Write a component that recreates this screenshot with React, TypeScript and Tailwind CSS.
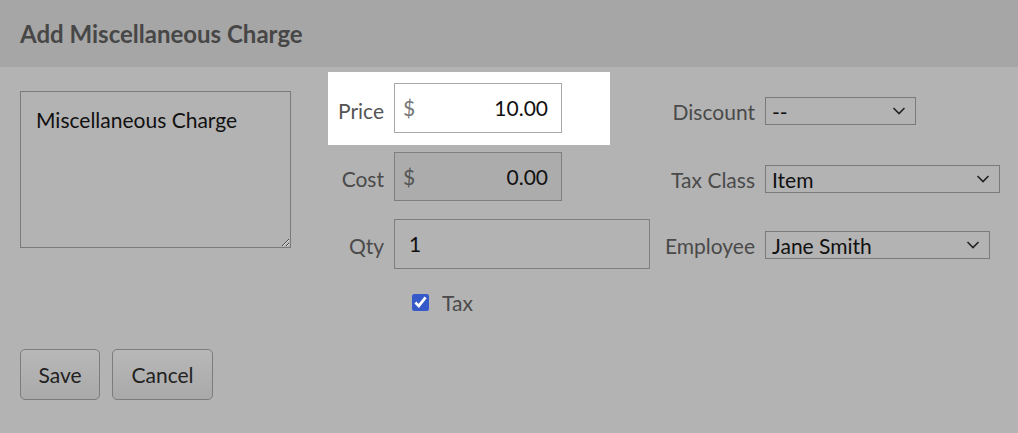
import React from "react";

const Chevron = () => (
  <svg
    className="pointer-events-none absolute right-[10px] top-1/2 -translate-y-1/2"
    width="14"
    height="9"
    viewBox="0 0 14 9"
    fill="none"
  >
    <path d="M1.5 1.5L7 7L12.5 1.5" stroke="#222" strokeWidth="1.6" />
  </svg>
);

const SelectBox = ({ value, width }: { value: string; width: string }) => (
  <div className={`relative h-[28px] ${width}`}>
    <select
      defaultValue={value}
      className="h-full w-full appearance-none border border-[#7a7a7a] bg-[#b3b3b3] pl-[6px] text-[21px] leading-none text-[#111] outline-none"
    >
      <option>{value}</option>
    </select>
    <Chevron />
  </div>
);

const App = () => {
  return (
    <div
      className="h-[433px] w-[1018px] overflow-hidden bg-[#b3b3b3]"
      style={{ fontFamily: "Lato, 'Open Sans', sans-serif" }}
    >
      {/* Header */}
      <div className="flex h-[67px] items-center bg-[#a6a6a6] px-5">
        <h1 className="text-[24px] font-bold text-[#474747]">
          Add Miscellaneous Charge
        </h1>
      </div>

      <div className="flex h-[259px] items-start pl-5 pt-[5px]">
        {/* Description */}
        <textarea
          defaultValue="Miscellaneous Charge"
          className="mt-[19px] h-[157px] w-[271px] border border-[#7b7b7b] bg-[#b3b3b3] px-[15px] py-[16px] text-[21px] leading-[24px] text-[#111] outline-none"
        />

        {/* Price / Cost / Qty */}
        <div className="ml-[37px] flex flex-col">
          <div className="flex w-[282px] items-center bg-white pb-[12px] pr-[48px] pt-[11px]">
            <span className="mt-[5px] w-[56px] text-right text-[21px] text-[#555]">Price</span>
            <div className="ml-[10px] flex h-[50px] w-[168px] items-center justify-between border border-[#a8a8a8] bg-white px-[8px] pr-[13px] text-[21px]">
              <span className="text-[#777]">$</span>
              <span className="text-[#111]">10.00</span>
            </div>
          </div>

          <div className="mt-[7px] flex items-center">
            <span className="mt-[5px] w-[56px] text-right text-[21px] text-[#4a4a4a]">Cost</span>
            <div className="ml-[10px] flex h-[49px] w-[168px] items-center justify-between border border-[#7f7f7f] bg-[#acacac] px-[8px] pr-[13px] text-[21px]">
              <span className="text-[#555]">$</span>
              <span className="text-[#111]">0.00</span>
            </div>
          </div>

          <div className="mt-[18px] flex items-center">
            <span className="mt-[4px] w-[56px] text-right text-[21px] text-[#4a4a4a]">Qty</span>
            <div className="ml-[10px] flex h-[50px] w-[256px] items-center border border-[#7f7f7f] bg-[#b3b3b3] px-[14px] text-[21px] text-[#111]">
              1
            </div>
          </div>

          <label className="ml-[84px] mt-[21px] flex h-[24px] items-center gap-[13px]">
            <input
              type="checkbox"
              defaultChecked
              className="m-0 h-[17px] w-[17px] accent-[#3559c9]"
            />
            <span className="text-[21px] leading-none text-[#4a4a4a]">Tax</span>
          </label>
        </div>

        {/* Discount / Tax class / Employee */}
        <div className="ml-[10px] mt-[25px] flex flex-col">
          <div className="flex h-[28px] items-center">
            <span className="w-[95px] text-right text-[21px] leading-none text-[#4a4a4a]">Discount</span>
            <div className="ml-[10px]">
              <SelectBox value="--" width="w-[151px]" />
            </div>
          </div>
          <div className="mt-[40px] flex h-[28px] items-center">
            <span className="w-[95px] text-right text-[21px] leading-none text-[#4a4a4a]">Tax Class</span>
            <div className="ml-[10px]">
              <SelectBox value="Item" width="w-[235px]" />
            </div>
          </div>
          <div className="mt-[38px] flex h-[28px] items-center">
            <span className="w-[95px] text-right text-[21px] leading-none text-[#4a4a4a]">Employee</span>
            <div className="ml-[10px]">
              <SelectBox value="Jane Smith" width="w-[225px]" />
            </div>
          </div>
        </div>
      </div>

      {/* Buttons */}
      <div className="mt-[23px] flex gap-[12px] pl-5">
        <button className="h-[51px] w-[80px] rounded-[5px] border border-[#7c7c7c] bg-gradient-to-b from-[#b8b8b8] to-[#a9a9a9] text-[21px] text-[#222]">
          Save
        </button>
        <button className="h-[51px] w-[101px] rounded-[5px] border border-[#7c7c7c] bg-gradient-to-b from-[#b8b8b8] to-[#a9a9a9] text-[21px] text-[#222]">
          Cancel
        </button>
      </div>
    </div>
  );
};

export default App;
